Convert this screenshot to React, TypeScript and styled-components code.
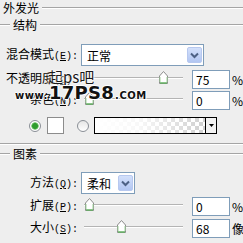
import styled, { createGlobalStyle } from "styled-components";

const GlobalStyle = createGlobalStyle`
  html, body {
    margin: 0;
    padding: 0;
    background: #eeeeee;
  }
  body {
    font-family: "Noto Sans CJK SC", "Liberation Sans", sans-serif;
    font-size: 12px;
    color: #000;
  }
`;

interface SliderRow {
  label: string;
  key: string;
  value: string;
  unit: string;
  at: number; // thumb position 0..1
  mt: number;
}

const upper: SliderRow[] = [
  { label: "不透明度", key: "O", value: "75", unit: "%", at: 0.79, mt: 4 },
  { label: "杂色", key: "N", value: "0", unit: "%", at: 0, mt: 2 },
];

const lower: SliderRow[] = [
  { label: "扩展", key: "P", value: "0", unit: "%", at: 0, mt: 3 },
  { label: "大小", key: "S", value: "68", unit: "像", at: 0.34, mt: 3 },
];

const Thumb = () => (
  <svg width="9" height="13" viewBox="0 0 9 13">
    <path d="M0.5 5 L4.5 0.5 L8.5 5 L8.5 12.5 L0.5 12.5 Z" fill="#fff" stroke="#8c8c8c" />
    <path d="M1 12 L8 12" stroke="#62b060" strokeWidth="1.5" />
    <path d="M1 11 L1 6 M8 11 L8 6" stroke="#9fd39a" strokeWidth="1" />
  </svg>
);

const Chevron = () => (
  <svg width="9" height="7" viewBox="0 0 9 7">
    <path d="M1 1.5 L4.5 5 L8 1.5" fill="none" stroke="#4d6185" strokeWidth="2" />
  </svg>
);

const App = () => {
  const renderSlider = (r: SliderRow) => (
    <Row key={r.key} $h={19} $mt={r.mt}>
      <Label>
        {r.label}
        <Key>
          (<u>{r.key}</u>):
        </Key>
      </Label>
      <Slider>
        <Track />
        <ThumbSpot style={{ left: `${4 + r.at * 94}px` }}>
          <Thumb />
        </ThumbSpot>
      </Slider>
      <NumberBox>{r.value}</NumberBox>
      <Unit>{r.unit}</Unit>
    </Row>
  );

  return (
    <Panel>
      <GlobalStyle />
      <Legend $lead={0} $mt={1}>
        <span>外发光</span>
        <Etch />
      </Legend>

      <Legend $lead={10} $mt={3}>
        <Etch $w={10} />
        <span>结构</span>
        <Etch />
      </Legend>

      <Row $h={22} $mt={12}>
        <Label>
          混合模式
          <Key>
            (<u>E</u>):
          </Key>
        </Label>
        <Select $w={123}>
          <span>正常</span>
          <DropButton>
            <Chevron />
          </DropButton>
        </Select>
      </Row>

      {upper.map(renderSlider)}

      <ColorRow>
        <Radio $checked />
        <Swatch />
        <Radio />
        <GradientBox>
          <GradientFill />
          <GradientArrow>
            <svg width="5" height="3" viewBox="0 0 5 3">
              <path d="M0 0 L5 0 L2.5 3 Z" fill="#000" />
            </svg>
          </GradientArrow>
        </GradientBox>
      </ColorRow>

      <GroupEnd />

      <Legend $lead={10} $mt={2}>
        <Etch $w={10} />
        <span>图素</span>
        <Etch />
      </Legend>

      <Row $h={22} $mt={11}>
        <Label>
          方法
          <Key>
            (<u>Q</u>):
          </Key>
        </Label>
        <Select $w={54}>
          <span>柔和</span>
          <DropButton>
            <Chevron />
          </DropButton>
        </Select>
      </Row>

      {lower.map(renderSlider)}

      <Watermark>起ps吧</Watermark>
      <Site>
        <small>www.</small>
        <b>17PS8</b>
        <small>.COM</small>
      </Site>
    </Panel>
  );
};

export default App;

const Panel = styled.div`
  position: relative;
  width: 243px;
  height: 243px;
  overflow: hidden;
  background: #eeeeee;
  display: flex;
  flex-direction: column;
`;

const Legend = styled.div<{ $lead: number; $mt: number }>`
  display: flex;
  align-items: center;
  gap: 3px;
  height: 14px;
  line-height: 14px;
  margin-top: ${(p) => p.$mt}px;
  padding-left: ${(p) => (p.$lead ? 0 : 3)}px;
  white-space: nowrap;
  flex: none;
`;

const Etch = styled.div<{ $w?: number }>`
  flex: ${(p) => (p.$w ? `0 0 ${p.$w}px` : "1")};
  height: 0;
  border-top: 1px solid #a5a5a5;
  border-bottom: 1px solid #ffffff;
`;

const GroupEnd = styled.div`
  margin-top: 9px;
  height: 0;
  border-top: 1px solid #a5a5a5;
  border-bottom: 1px solid #ffffff;
  flex: none;
`;

const Row = styled.div<{ $h: number; $mt: number }>`
  display: flex;
  align-items: center;
  height: ${(p) => p.$h}px;
  margin-top: ${(p) => p.$mt}px;
  flex: none;
`;

const Label = styled.label`
  flex: 0 0 78px;
  margin-right: 3px;
  display: flex;
  align-items: baseline;
  justify-content: flex-end;
  white-space: nowrap;
  line-height: 14px;
`;

const Key = styled.span`
  font-family: "Liberation Mono", monospace;
  font-size: 10px;

  u {
    text-underline-offset: 1px;
  }
`;

const Select = styled.div<{ $w: number }>`
  width: ${(p) => p.$w}px;
  height: 22px;
  box-sizing: border-box;
  border: 1px solid #7f9db9;
  background: #fff;
  display: flex;
  align-items: center;
  padding: 0 1px 0 5px;
`;

const DropButton = styled.span`
  margin-left: auto;
  width: 15px;
  height: 16px;
  border: 1px solid #b7c8ef;
  border-radius: 2px;
  box-sizing: border-box;
  background: linear-gradient(#d3e0fb, #b2c6f2);
  display: flex;
  align-items: center;
  justify-content: center;
`;

const Slider = styled.div`
  position: relative;
  flex: 0 0 102px;
  height: 19px;
  margin-right: 9px;
`;

const Track = styled.div`
  position: absolute;
  left: 3px;
  right: 0;
  top: 7px;
  height: 0;
  border-top: 1px solid #b4b4b4;
  border-bottom: 1px solid #ffffff;
`;

const ThumbSpot = styled.span`
  position: absolute;
  top: 1px;
  display: flex;
`;

const NumberBox = styled.div`
  flex: 0 0 38px;
  height: 19px;
  box-sizing: border-box;
  border: 1px solid #7f9db9;
  background: #fff;
  padding-left: 3px;
  line-height: 17px;
`;

const Unit = styled.span`
  margin-left: 2px;
  line-height: 14px;
`;

const ColorRow = styled.div`
  display: flex;
  align-items: center;
  height: 17px;
  margin-top: 7px;
  padding-left: 29px;
  flex: none;
`;

const Radio = styled.span<{ $checked?: boolean }>`
  width: 12px;
  height: 12px;
  box-sizing: border-box;
  border-radius: 50%;
  border: 1px solid #8a8f96;
  background: ${(p) =>
    p.$checked
      ? "radial-gradient(circle, #2e9c2e 0 2.5px, #8fd28a 3.5px, #fff 4px)"
      : "linear-gradient(#e6e6e6, #fff)"};
  margin-right: ${(p) => (p.$checked ? 6 : 5)}px;
`;

const Swatch = styled.span`
  width: 17px;
  height: 17px;
  box-sizing: border-box;
  border: 1px solid #8c8c8c;
  background: #fff;
  margin-right: 13px;
`;

const GradientBox = styled.div`
  width: 123px;
  height: 17px;
  box-sizing: border-box;
  border: 1px solid #000;
  display: flex;
`;

const GradientFill = styled.div`
  flex: 1;
  background-image: linear-gradient(to right, #fff 0%, rgba(255, 255, 255, 0.85) 40%, rgba(255, 255, 255, 0) 100%),
    linear-gradient(45deg, #d0d0d0 25%, transparent 25%, transparent 75%, #d0d0d0 75%),
    linear-gradient(45deg, #d0d0d0 25%, #fff 25%, #fff 75%, #d0d0d0 75%);
  background-size: 100% 100%, 8px 8px, 8px 8px;
  background-position: 0 0, 0 0, 4px 4px;
`;

const GradientArrow = styled.div`
  flex: 0 0 10px;
  border-left: 1px solid #000;
  background: #f2f2f2;
  display: flex;
  align-items: center;
  justify-content: center;
`;

const Watermark = styled.div`
  position: absolute;
  left: 48px;
  top: 68px;
  font-size: 15px;
  line-height: 18px;
  color: #1a1a1a;
  text-shadow: 0 0 2px #fff, 0 0 2px #fff, 0 0 3px #fff;
`;

const Site = styled.div`
  position: absolute;
  left: 15px;
  top: 82px;
  display: flex;
  align-items: baseline;
  font-family: "DejaVu Sans", sans-serif;
  font-weight: bold;
  color: #111;
  text-shadow: 1px 0 #fff, -1px 0 #fff, 0 1px #fff, 0 -1px #fff;

  small {
    font-size: 10px;
    letter-spacing: 0.5px;
  }

  b {
    font-size: 18px;
    letter-spacing: 0.3px;
    margin: 0 1px;
  }
`;
